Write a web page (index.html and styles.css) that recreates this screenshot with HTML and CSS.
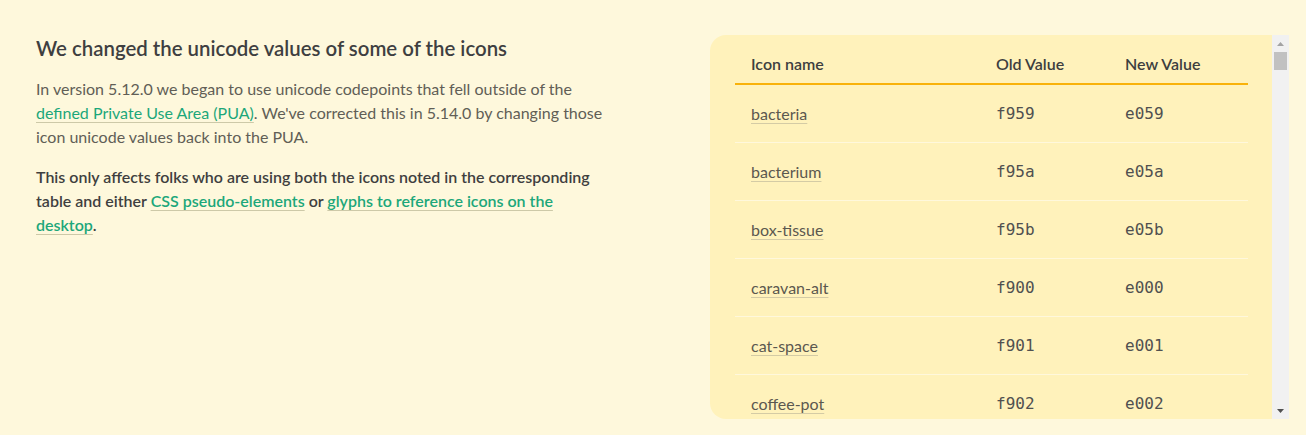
FILE: index.html
```html
<!DOCTYPE html>
<html lang="en">
<head>
<meta charset="utf-8">
<title>Unicode changes</title>
<link rel="stylesheet" href="styles.css">
</head>
<body>
<div class="page">
  <section class="intro">
    <h2 class="title">We changed the unicode values of some of the icons</h2>
    <p class="text">In version 5.12.0 we began to use unicode codepoints that fell outside of the <a class="link" href="#">defined Private Use Area (PUA)</a>. We've corrected this in 5.14.0 by changing those icon unicode values back into the PUA.</p>
    <p class="text strong">This only affects folks who are using both the icons noted in the corresponding table and either <a class="link" href="#">CSS pseudo-elements</a> or <a class="link" href="#">glyphs to reference icons on the desktop</a>.</p>
  </section>
  <div class="card">
    <div class="card-body">
      <table class="table">
        <colgroup><col class="c1"><col class="c2"><col class="c3"></colgroup>
        <thead>
          <tr><th>Icon name</th><th>Old Value</th><th>New Value</th></tr>
        </thead>
        <tbody>
          <tr><td><a class="name" href="#">bacteria</a></td><td class="code">f959</td><td class="code">e059</td></tr>
          <tr><td><a class="name" href="#">bacterium</a></td><td class="code">f95a</td><td class="code">e05a</td></tr>
          <tr><td><a class="name" href="#">box-tissue</a></td><td class="code">f95b</td><td class="code">e05b</td></tr>
          <tr><td><a class="name" href="#">caravan-alt</a></td><td class="code">f900</td><td class="code">e000</td></tr>
          <tr><td><a class="name" href="#">cat-space</a></td><td class="code">f901</td><td class="code">e001</td></tr>
          <tr><td><a class="name" href="#">coffee-pot</a></td><td class="code">f902</td><td class="code">e002</td></tr>
          <tr><td><a class="name" href="#">comet</a></td><td class="code">f903</td><td class="code">e003</td></tr>
          <tr><td><a class="name" href="#">fan-table</a></td><td class="code">f904</td><td class="code">e004</td></tr>
        </tbody>
      </table>
    </div>
    <div class="scrollbar" aria-hidden="true">
      <div class="sb-btn">
        <svg width="7" height="4" viewBox="0 0 7 4"><path d="M0 4 L3.5 0 L7 4 Z" fill="#a3a3a3"/></svg>
      </div>
      <div class="sb-track"><div class="sb-thumb"></div></div>
      <div class="sb-btn">
        <svg width="7" height="4" viewBox="0 0 7 4"><path d="M0 0 L7 0 L3.5 4 Z" fill="#505050"/></svg>
      </div>
    </div>
  </div>
</div>
</body>
</html>
```
FILE: styles.css
```css
html, body {
  margin: 0;
  padding: 0;
  background: #fef8dc;
}
body {
  font-family: "Lato", "Liberation Sans", sans-serif;
  color: #5f5c54;
}
.page {
  display: flex;
  align-items: flex-start;
  gap: 98px;
  padding: 35px 17px 16px 36px;
}
.intro {
  flex: 0 0 576px;
}
.title {
  margin: 0;
  font-size: 20.4px;
  line-height: 26px;
  font-weight: 600;
  color: #3e3f41;
}
.text {
  margin: 16px 0 0;
  font-size: 16px;
  line-height: 24px;
  color: #615e56;
}
.strong {
  font-weight: 600;
  color: #3f3f3f;
}
.link {
  color: #1ca77a;
  text-decoration: underline;
  text-decoration-color: #cdc9a8;
  text-underline-offset: 3px;
}
.card {
  flex: 0 0 579px;
  height: 384px;
  display: flex;
  background: #fff2bb;
  border-radius: 16px 0 0 16px;
  overflow: hidden;
}
.card-body {
  flex: 1;
  min-width: 0;
  overflow: hidden;
  padding: 0 24px 0 25px;
}
.scrollbar {
  flex: 0 0 17px;
  display: flex;
  flex-direction: column;
  background: #f1f1f1;
}
.sb-btn {
  height: 17px;
  display: flex;
  align-items: center;
  justify-content: center;
}
.sb-track {
  flex: 1;
  padding: 0 2px;
}
.sb-thumb {
  height: 18px;
  background: #c1c1c1;
}
.table {
  width: 100%;
  border-collapse: collapse;
  table-layout: fixed;
}
.c1 { width: 245px; }
.c2 { width: 129px; }
.c3 { width: auto; }
.table th {
  text-align: left;
  font-size: 16px;
  line-height: 24px;
  font-weight: 600;
  color: #3d3e40;
  padding: 17px 16px 7px;
  border-bottom: 2px solid #f9b20a;
}
.table td {
  font-size: 16px;
  line-height: 24px;
  padding: 17px 16px 16px;
  border-bottom: 1px solid #fff8dc;
  white-space: nowrap;
}
.name {
  color: #5b584f;
  text-decoration: underline;
  text-decoration-color: #d4cba5;
  text-underline-offset: 3px;
}
.code {
  font-family: "DejaVu Sans Mono", "Liberation Mono", monospace;
  font-size: 13.5px;
  color: #505050;
}
```
